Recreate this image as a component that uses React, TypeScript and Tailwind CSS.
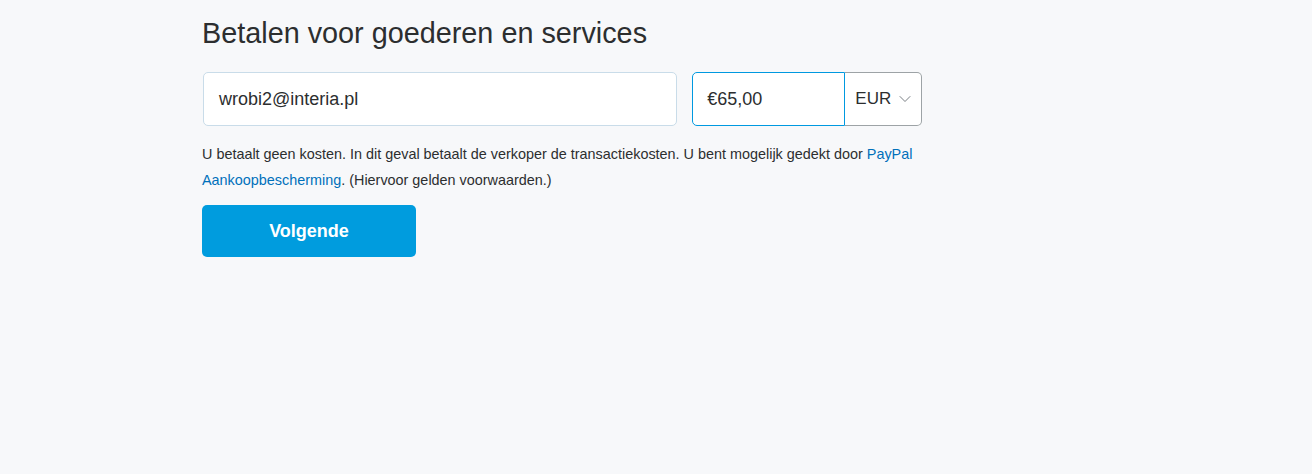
import { ChevronDown } from 'lucide-react';

export default function App() {
  return (
    <div className="min-h-[474px] w-full bg-[#f7f8fa] font-['Liberation_Sans',Arial,sans-serif] text-[#2c2e2f]">
      <div className="pl-[202px] pt-[14px] w-[922px]">
        <h1 className="text-[28.8px] leading-[38px] font-normal text-[#2c2e2f]">
          Betalen voor goederen en services
        </h1>

        <div className="mt-[20px] flex gap-[15px]">
          <div className="flex h-[54px] w-[475px] items-center rounded-[5px] border border-[#c9dce9] bg-white pl-[15px] ml-px">
            <span className="text-[18px]">wrobi2@interia.pl</span>
          </div>
          <div className="flex h-[54px] w-[230px] rounded-[5px] bg-white">
            <div className="flex w-[153px] items-center rounded-l-[5px] border border-[#0099e0] pl-[14px]">
              <span className="text-[18px]">€65,00</span>
            </div>
            <div className="flex flex-1 items-center justify-between rounded-r-[5px] border border-l-0 border-[#9da3a6] pl-[10px] pr-[6px]">
              <span className="text-[17px] text-[#2c2e2f]">EUR</span>
              <ChevronDown className="h-[20px] w-[20px] text-[#6c7378]" strokeWidth={1.1} />
            </div>
          </div>
        </div>

        <p className="mt-[15px] text-[14.4px] leading-[26px] text-[#2c2e2f]">
          U betaalt geen kosten. In dit geval betaalt de verkoper de transactiekosten. U bent mogelijk gedekt door{' '}
          <a className="text-[#0070ba]" href="#">PayPal Aankoopbescherming</a>. (Hiervoor gelden voorwaarden.)
        </p>

        <button className="mt-[12px] h-[52px] w-[214px] rounded-[5px] bg-[#009cde] text-[18px] font-bold text-white">
          Volgende
        </button>
      </div>
    </div>
  );
}
